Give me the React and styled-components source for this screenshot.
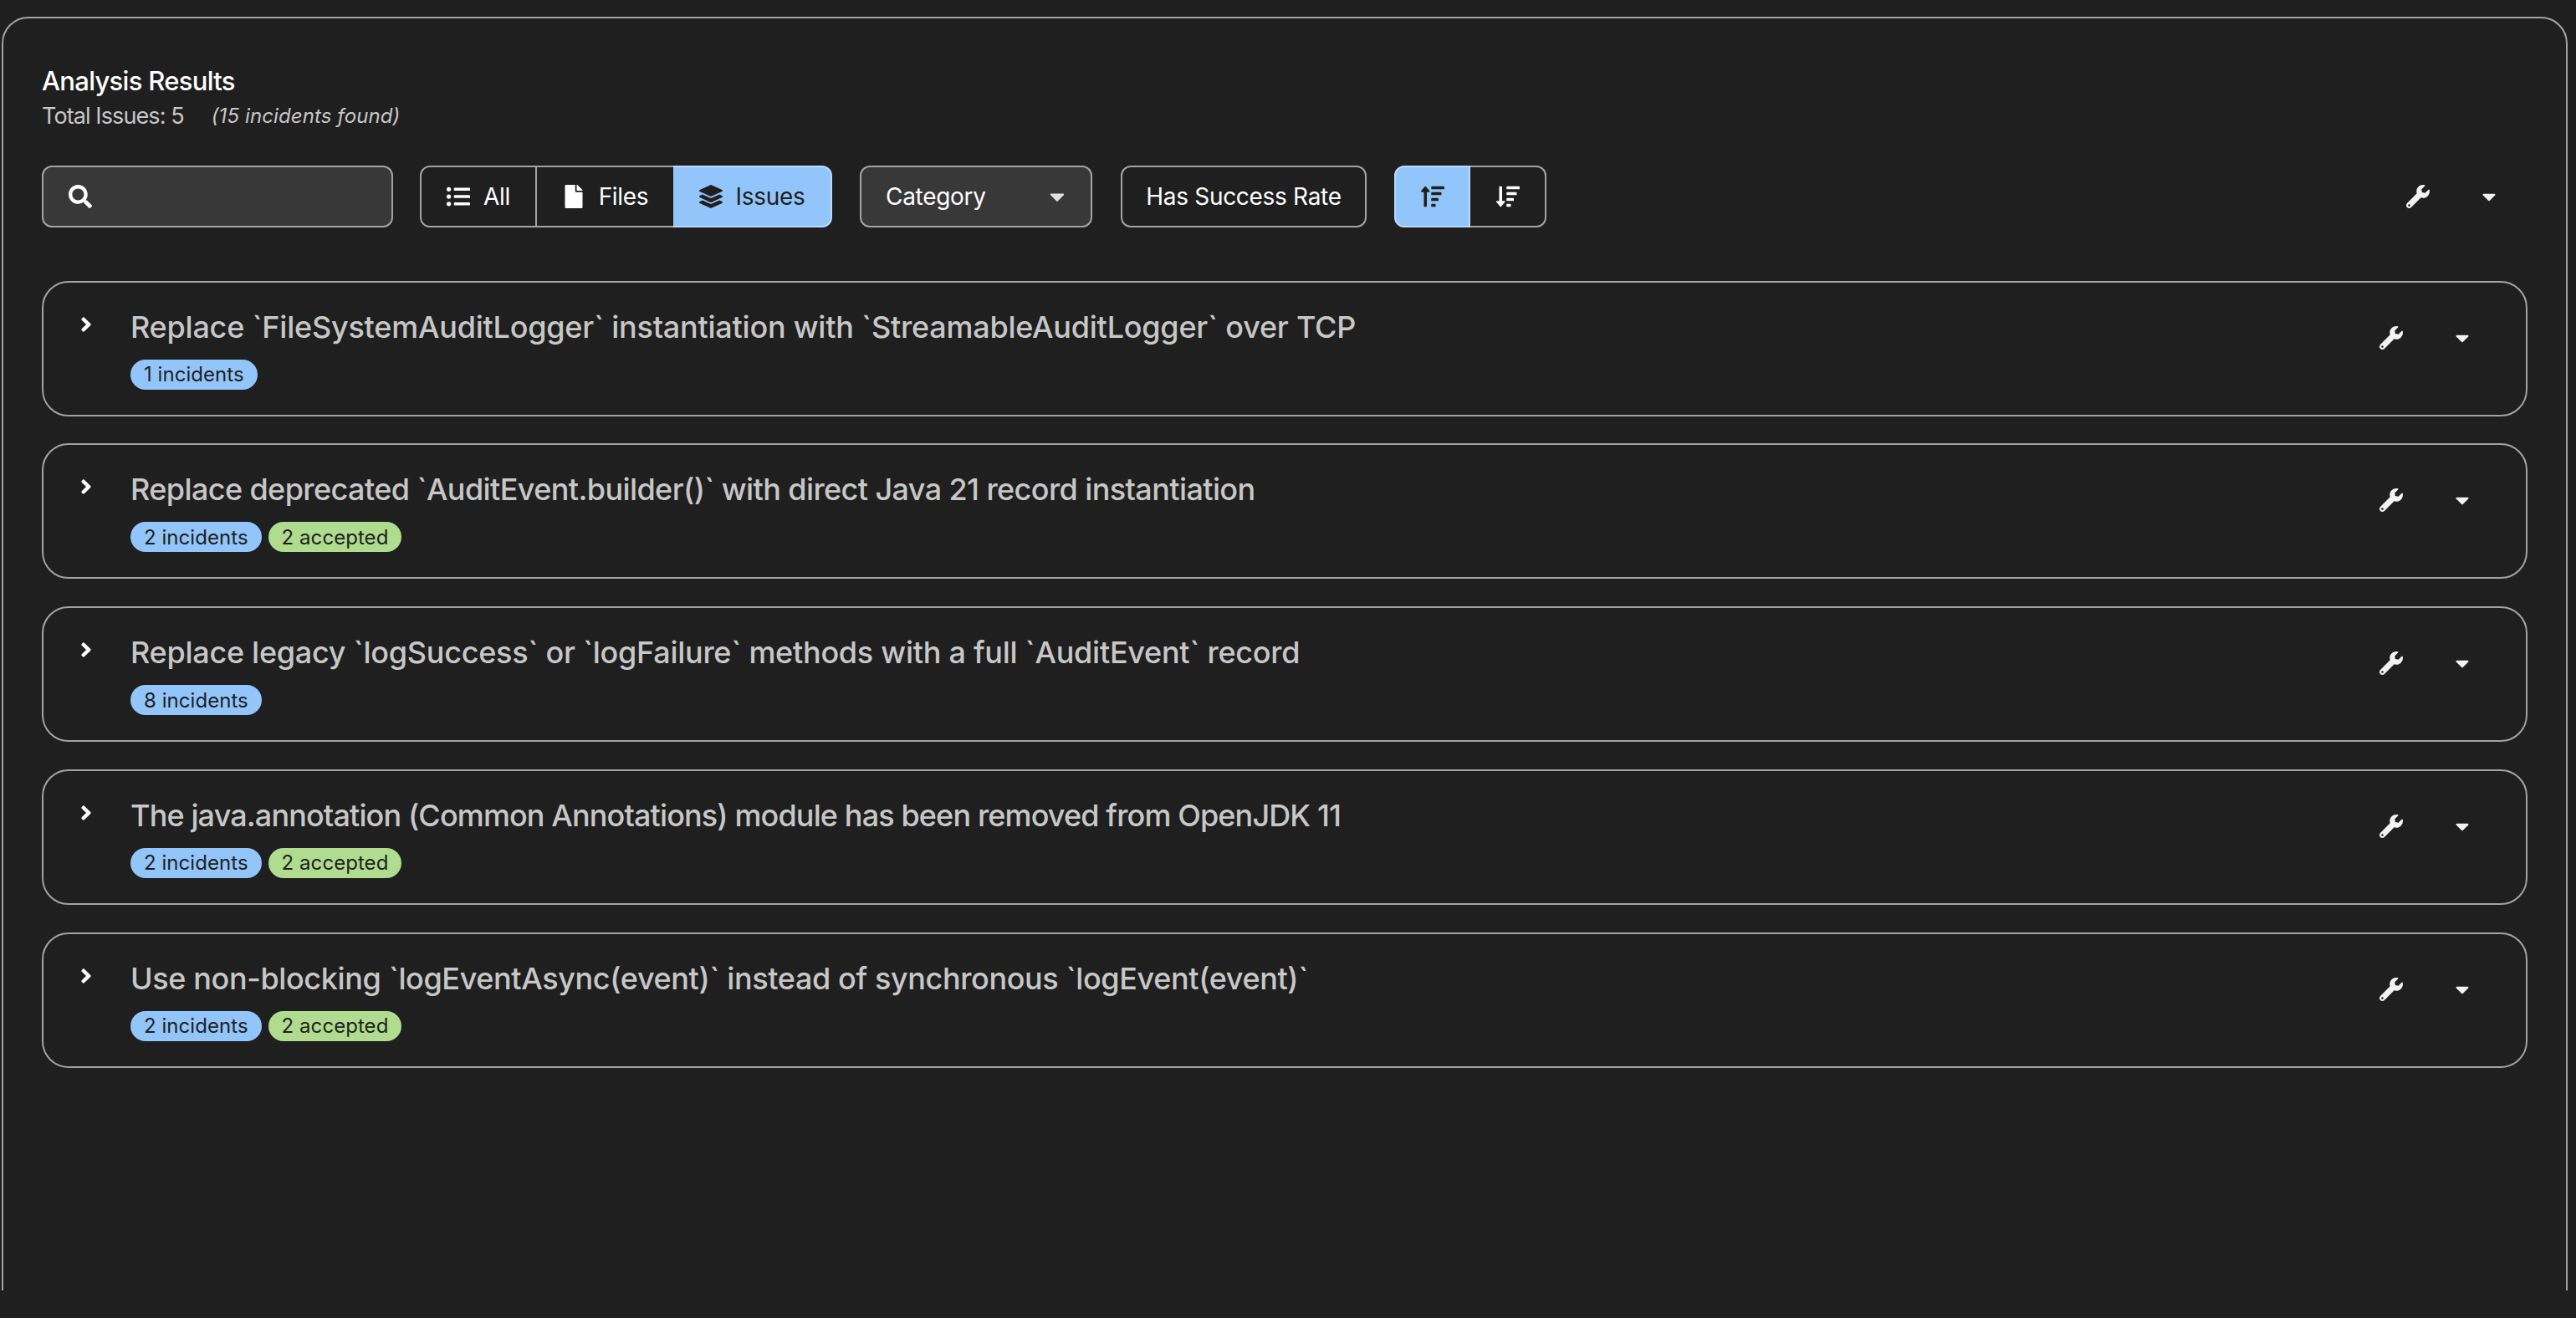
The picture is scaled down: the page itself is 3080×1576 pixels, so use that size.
import React from "react"
import styled, { createGlobalStyle } from "styled-components"
import {
  FaSearch,
  FaListUl,
  FaFile,
  FaLayerGroup,
  FaCaretDown,
  FaSortAmountUp,
  FaSortAmountDown,
  FaWrench,
  FaAngleRight,
} from "react-icons/fa"

// tracking evens out the width difference against the original display font
const issues = [
  {
    title: "Replace `FileSystemAuditLogger` instantiation with `StreamableAuditLogger` over TCP",
    incidents: 1,
    tracking: -0.23,
  },
  {
    title: "Replace deprecated `AuditEvent.builder()` with direct Java 21 record instantiation",
    incidents: 2,
    accepted: 2,
    tracking: -0.6,
  },
  {
    title: "Replace legacy `logSuccess` or `logFailure` methods with a full `AuditEvent` record",
    incidents: 8,
    tracking: -0.27,
  },
  {
    title: "The java.annotation (Common Annotations) module has been removed from OpenJDK 11",
    incidents: 2,
    accepted: 2,
    tracking: -0.87,
  },
  {
    title: "Use non-blocking `logEventAsync(event)` instead of synchronous `logEvent(event)`",
    incidents: 2,
    accepted: 2,
    tracking: -0.38,
  },
]

const App = () => {
  return (
    <Frame>
      <GlobalStyle />
      <Panel>
        <Heading>Analysis Results</Heading>
        <Summary>
          <span>Total Issues: 5</span>
          <em>(15 incidents found)</em>
        </Summary>
        <Toolbar>
          <SearchBox>
            <FaSearch />
          </SearchBox>
          <Group>
            <GroupButton $width={140}>
              <FaListUl />
              All
            </GroupButton>
            <GroupButton $width={163}>
              <FaFile />
              Files
            </GroupButton>
            <GroupButton $width={190} $active>
              <FaLayerGroup />
              Issues
            </GroupButton>
          </Group>
          <Select>
            Category
            <FaCaretDown />
          </Select>
          <PlainButton>Has Success Rate</PlainButton>
          <Group>
            <SortButton $active>
              <FaSortAmountUp />
            </SortButton>
            <SortButton>
              <FaSortAmountDown />
            </SortButton>
          </Group>
          <Actions $toolbar>
            <FaWrench />
            <FaCaretDown />
          </Actions>
        </Toolbar>
        <List>
          {issues.map((issue) => (
            <Card key={issue.title}>
              <Chevron>
                <FaAngleRight />
              </Chevron>
              <CardBody>
                <CardTitle $tracking={issue.tracking}>{issue.title}</CardTitle>
                <Badges>
                  <Badge $color="#92c5f9">{issue.incidents} incidents</Badge>
                  {issue.accepted && (
                    <Badge $color="#afdc8f">{issue.accepted} accepted</Badge>
                  )}
                </Badges>
              </CardBody>
              <Actions>
                <FaWrench />
                <FaCaretDown />
              </Actions>
            </Card>
          ))}
        </List>
      </Panel>
    </Frame>
  )
}

const GlobalStyle = createGlobalStyle`
  html, body {
    margin: 0;
    background: #1f1f1f;
  }
  * {
    box-sizing: border-box;
  }
`

const Frame = styled.div`
  height: 1543px;
  overflow: hidden;
  padding: 20px 10px 0 2px;
  font-family: Inter, "Noto Sans", sans-serif;
  color: #fff;
`

const Panel = styled.main`
  height: 1700px;
  border: 2px solid #a3a3a3;
  border-radius: 32px;
  padding: 56px 46px 0;
`

const Heading = styled.h1`
  margin: 0;
  font-size: 31px;
  line-height: 38px;
  font-weight: 500;
  letter-spacing: -0.7px;
`

const Summary = styled.div`
  display: flex;
  gap: 33px;
  margin-top: 5px;
  font-size: 27px;
  line-height: 36px;
  color: #c7c7c7;
  letter-spacing: -0.9px;
  em {
    font-size: 24px;
    letter-spacing: 0.1px;
  }
`

const Toolbar = styled.div`
  display: flex;
  align-items: stretch;
  height: 74px;
  margin-top: 41px;
  font-size: 28px;
  letter-spacing: -0.3px;
`

const SearchBox = styled.div`
  width: 420px;
  background: #383838;
  border: 2px solid #a3a3a3;
  border-radius: 12px;
  display: flex;
  align-items: center;
  padding-left: 30px;
  margin-right: 32px;
  svg {
    width: 28px;
    height: 28px;
  }
`

const Group = styled.div`
  display: flex;
  margin-right: 33px;
  > *:first-child {
    border-radius: 12px 0 0 12px;
  }
  > *:last-child {
    border-radius: 0 12px 12px 0;
    border-left-width: 0;
  }
  > *:nth-child(2):not(:last-child) {
    border-width: 2px 0;
    border-radius: 0;
  }
`

const GroupButton = styled.div`
  width: ${(p) => p.$width}px;
  display: flex;
  align-items: center;
  justify-content: center;
  gap: 16px;
  border: 2px solid ${(p) => (p.$active ? "#b9dafc" : "#a3a3a3")};
  background: ${(p) => (p.$active ? "#92c5f9" : "transparent")};
  color: ${(p) => (p.$active ? "#1f1f1f" : "#fff")};
  svg {
    width: 28px;
    height: 28px;
  }
`

const Select = styled.div`
  width: 278px;
  background: #383838;
  border: 2px solid #a3a3a3;
  border-radius: 12px;
  display: flex;
  align-items: center;
  justify-content: space-between;
  padding: 0 31px 0 29px;
  margin-right: 34px;
  svg {
    width: 18px;
    height: 28px;
    color: #e0e0e0;
  }
`

const PlainButton = styled.div`
  width: 294px;
  border: 2px solid #a3a3a3;
  border-radius: 12px;
  display: flex;
  align-items: center;
  justify-content: center;
  margin-right: 33px;
`

const SortButton = styled.div`
  width: 91px;
  display: flex;
  align-items: center;
  justify-content: center;
  border: 2px solid ${(p) => (p.$active ? "#b9dafc" : "#a3a3a3")};
  background: ${(p) => (p.$active ? "#92c5f9" : "transparent")};
  color: ${(p) => (p.$active ? "#1f1f1f" : "#fff")};
  svg {
    width: 28px;
    height: 28px;
  }
`

const Actions = styled.div`
  margin-left: auto;
  display: flex;
  align-items: center;
  gap: 62px;
  padding-right: ${(p) => (p.$toolbar ? "37px" : "67px")};
  align-self: ${(p) => (p.$toolbar ? "center" : "flex-start")};
  margin-top: ${(p) => (p.$toolbar ? "0" : "52px")};
  color: #f2f2f2;
  svg:first-child {
    width: 28px;
    height: 28px;
  }
  svg:last-child {
    width: 18px;
    height: 26px;
  }
`

const List = styled.div`
  display: flex;
  flex-direction: column;
  gap: 32.75px;
  margin-top: 63.6px;
`

const Card = styled.section`
  display: flex;
  height: 162px;
  border: 2px solid #a3a3a3;
  border-radius: 32px;
`

const Chevron = styled.div`
  width: 104px;
  padding: 36px 0 0 40px;
  svg {
    width: 22px;
    height: 28px;
  }
`

const CardBody = styled.div`
  padding-top: 32px;
`

const CardTitle = styled.h2`
  margin: 0;
  font-size: 36px;
  line-height: 42px;
  font-weight: 500;
  color: #c7c7c7;
  letter-spacing: ${(p) => p.$tracking}px;
`

const Badges = styled.div`
  display: flex;
  gap: 8px;
  margin-top: 18px;
`

const Badge = styled.span`
  height: 36px;
  display: flex;
  align-items: center;
  padding: 0 16px;
  border-radius: 18px;
  background: ${(p) => p.$color};
  color: #1f1f1f;
  font-size: 24px;
  letter-spacing: 0.05px;
`

export default App
